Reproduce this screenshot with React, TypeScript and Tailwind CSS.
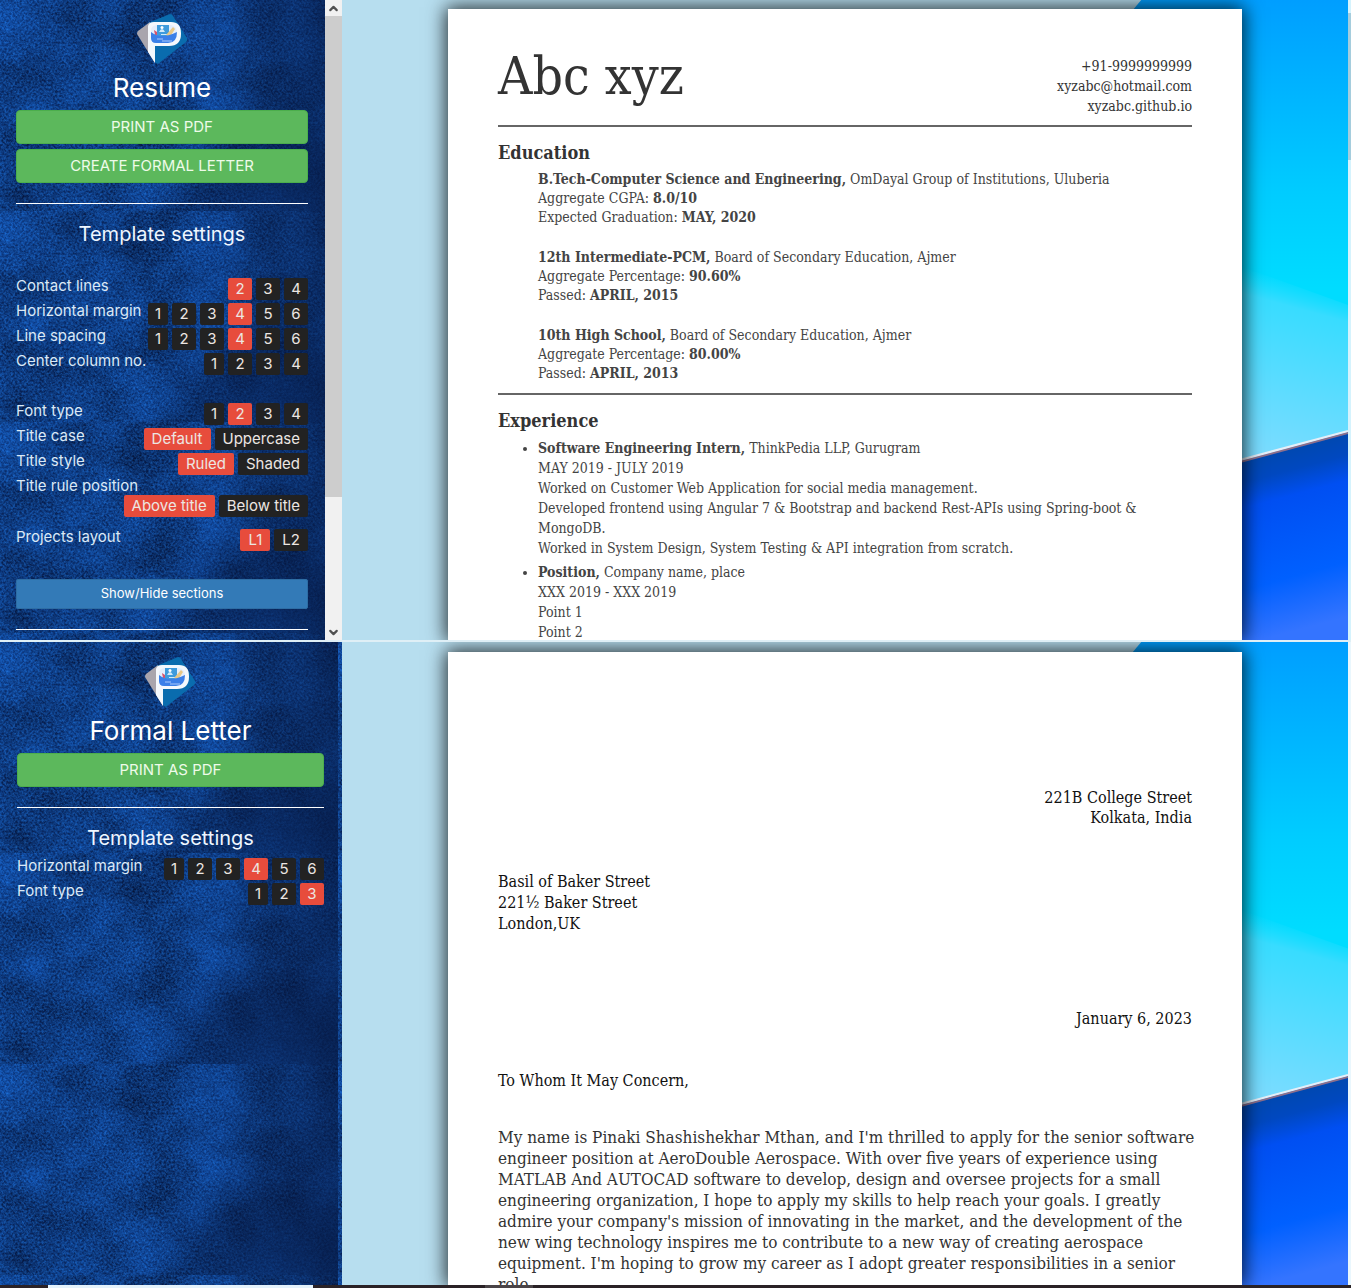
import { ChevronDown, ChevronUp } from "lucide-react";
import type { ReactNode } from "react";

function Logo() {
  return (
    <svg viewBox="0 0 51 51" className="mx-auto size-[51px]" aria-label="Logo" role="img">
      <path d="M33 0 Q35 0 36 2 L50 24 Q51 26 49 28 L22 49 Q20 51 18 48 L11 9 Z" fill="#0a6cae" />
      <path d="M1 17 L13 8 L18 49 L0 20 Q0 18 1 17 Z" fill="#a9a5ad" />
      <path d="M11 12 Q12 8 17 8 H34 Q44 8 44 19 V20 Q44 32 32 32 H18 V49 L11 38 Z" fill="#f4f8fd" />
      <path d="M14 17 Q14 11 20 11 H34 Q40 12 40 19 Q40 29 31 29 H19 Q14 29 14 24 Z" fill="#e4eefc" />
      <path d="M20 11 H32 V25 H20 Z" fill="#3f9bdc" />
      <circle cx="25" cy="13.5" r="1.5" fill="#fff" />
      <path d="M22 18 Q25 12 28 18 Z M24 20h6v1h-6z M25 22h5v1h-5z" fill="#cfe9fa" />
      <path d="M29 21 L36 13 L38 15 L33 23 Z" fill="#e8c887" />
      <path d="M17 16 l3 2 v3 h-2 Z" fill="#d9536c" />
      <path d="M14 18 Q24 26 40 18 Q40 29 31 29 H19 Q14 29 14 24 Z" fill="#3b7fe8" />
      <path d="M20 25h6M25 27h10" stroke="#c7dcff" strokeWidth="0.8" />
    </svg>
  );
}

function Texture({ id, seed }: { id: string; seed: number }) {
  return (
    <svg className="absolute inset-0 -z-10 h-full w-full bg-[#0d3a80]" aria-hidden="true">
      <defs>
        <filter id={id + "-cloud"} x="0" y="0" width="100%" height="100%" colorInterpolationFilters="sRGB">
          <feTurbulence type="fractalNoise" baseFrequency="0.016" numOctaves={6} seed={seed} />
          <feColorMatrix values="0.08 0 0 0 0.02  0.36 0 0 0 0.06  0.7 0 0 0 0.18  0 0 0 0 1" />
        </filter>
        <filter id={id + "-grain"} x="0" y="0" width="100%" height="100%" colorInterpolationFilters="sRGB">
          <feTurbulence type="fractalNoise" baseFrequency="0.45" numOctaves={3} seed={seed + 3} />
          <feColorMatrix values="0.3 0 0 0 -0.1  1 0 0 0 -0.25  1.6 0 0 0 -0.28  0 0 0 0 0.35" />
        </filter>
        <linearGradient id={id + "-shade"}>
          <stop offset="0.5" stopColor="#061c4a" stopOpacity="0" />
          <stop offset="1" stopColor="#061c4a" stopOpacity="0.6" />
        </linearGradient>
        <radialGradient id={id + "-corner"} cx="0.85" cy="0.9" r="0.45">
          <stop offset="0" stopColor="#061c4a" stopOpacity="0.55" />
          <stop offset="1" stopColor="#061c4a" stopOpacity="0" />
        </radialGradient>
        <pattern id={id + "-tile"} width="338" height="211" patternUnits="userSpaceOnUse">
          <rect width="338" height="211" filter={`url(#${id}-cloud)`} />
          <rect width="338" height="211" filter={`url(#${id}-grain)`} />
          <rect width="338" height="211" fill={`url(#${id}-shade)`} />
          <rect width="338" height="211" fill={`url(#${id}-corner)`} />
        </pattern>
      </defs>
      <rect width="100%" height="100%" fill={`url(#${id}-tile)`} />
    </svg>
  );
}

function Backdrop({ id }: { id: string }) {
  return (
    <svg
      className="absolute inset-0 -z-10 h-full w-full"
      viewBox="0 0 1007 640"
      preserveAspectRatio="none"
      aria-hidden="true"
    >
      <defs>
        <linearGradient id={id + "-sky"} x1="0" y1="0" x2="0" y2="1">
          <stop offset="0" stopColor="#009eff" />
          <stop offset="0.3" stopColor="#00ccff" />
          <stop offset="0.45" stopColor="#00dcff" />
        </linearGradient>
        <linearGradient
          id={id + "-glow"}
          gradientUnits="userSpaceOnUse"
          x1="915"
          y1="270"
          x2="866"
          y2="450"
        >
          <stop offset="0" stopColor="#2cdcff" stopOpacity="0" />
          <stop offset="0.14" stopColor="#38dcff" />
          <stop offset="1" stopColor="#80dcff" />
        </linearGradient>
        <linearGradient
          id={id + "-sea"}
          gradientUnits="userSpaceOnUse"
          x1="900"
          y1="461"
          x2="946"
          y2="633"
        >
          <stop offset="0" stopColor="#0048b0" />
          <stop offset="0.12" stopColor="#0048c0" />
          <stop offset="0.26" stopColor="#004ff2" />
          <stop offset="0.7" stopColor="#0060ff" />
          <stop offset="1" stopColor="#3474ff" />
        </linearGradient>
      </defs>
      <rect width="1007" height="640" fill="#b7deef" />
      <path d="M800 0 H1007 V640 H780 V24 Z" fill={`url(#${id}-sky)`} />
      <path d="M860 252 L1007 305 V440 L860 475 Z" fill={`url(#${id}-glow)`} />
      <path d="M880 466 L1007 432 V640 H880 Z" fill={`url(#${id}-sea)`} />
      <path d="M880 467 L1007 433" stroke="#8c6f8c" strokeWidth="2" />
      <path d="M880 465 L1007 431" stroke="#e6eef8" strokeWidth="2" />
    </svg>
  );
}

function GreenButton({ children }: { children: ReactNode }) {
  return (
    <button className="h-[34px] w-full rounded border border-[#4cae4c] bg-[#5cb85c] text-[15px] text-[#eefbe9]">
      {children}
    </button>
  );
}

function Setting({
  label,
  options,
  active,
  stacked = false,
}: {
  label: string;
  options: string[];
  active?: string;
  stacked?: boolean;
}) {
  return (
    <div
      role="group"
      aria-label={label}
      className={stacked ? "flex flex-col" : "flex h-[22px] items-start justify-between"}
    >
      <span className={stacked ? "h-[17px] leading-4 whitespace-nowrap" : "leading-4 whitespace-nowrap"}>{label}</span>
      <div className="flex justify-end gap-1">
        {options.map((o) => (
          <button
            key={o}
            aria-pressed={o === active}
            className={[
              "h-[22px] rounded-xs text-center leading-[22px] whitespace-nowrap text-[#ece6e2]",
              o === active ? "bg-[#e74c3c]" : "bg-[#222222]",
              o === "1" ? "w-5" : o.length === 1 ? "w-6" : "px-2",
            ].join(" ")}
          >
            {o}
          </button>
        ))}
      </div>
    </div>
  );
}

function Desk({ children }: { children: ReactNode }) {
  return (
    <main className="relative isolate flex min-w-0 flex-1 justify-center overflow-hidden">
      {children}
    </main>
  );
}

const sheet =
  "w-[794px] shrink-0 bg-white px-[50px] shadow-[0_0_18px_2px_rgba(0,0,0,0.8)] font-['DejaVu_Serif_Condensed','DejaVu_Serif',serif]";

function Entry({ title, place, children }: { title: string; place: string; children: ReactNode }) {
  return (
    <li>
      <b>{title}</b> {place}
      <br />
      {children}
    </li>
  );
}

function ResumeSection() {
  return (
    <section className="flex min-h-0">
      <aside className="relative isolate w-[325px] shrink-0 overflow-hidden px-4 pt-3.5 pr-[17px] font-[Inter,sans-serif] text-[15px] text-[#dbe9f6]">
        <Texture id="tex-a" seed={4} />
        <Logo />
        <h1 className="mt-1.5 mb-1.5 h-[33px] text-center text-[26px] leading-[33px] text-white">Resume</h1>
        <div className="flex flex-col gap-[5px]">
          <GreenButton>PRINT AS PDF</GreenButton>
          <GreenButton>CREATE FORMAL LETTER</GreenButton>
        </div>
        <hr className="mt-5 border-white" />
        <h2 className="mt-5 text-center text-xl leading-5 text-[#eef6ff]">Template settings</h2>
        <div className="mt-[34px] flex flex-col gap-[3px]">
          <Setting label="Contact lines" options={["2", "3", "4"]} active="2" />
          <Setting label="Horizontal margin" options={["1", "2", "3", "4", "5", "6"]} active="4" />
          <Setting label="Line spacing" options={["1", "2", "3", "4", "5", "6"]} active="4" />
          <Setting label="Center column no." options={["1", "2", "3", "4"]} />
        </div>
        <div className="mt-7 flex flex-col gap-[3px]">
          <Setting label="Font type" options={["1", "2", "3", "4"]} active="2" />
          <Setting label="Title case" options={["Default", "Uppercase"]} active="Default" />
          <Setting label="Title style" options={["Ruled", "Shaded"]} active="Ruled" />
          <Setting label="Title rule position" options={["Above title", "Below title"]} active="Above title" stacked />
        </div>
        <div className="mt-3">
          <Setting label="Projects layout" options={["L1", "L2"]} active="L1" />
        </div>
        <button className="mt-7 h-[30px] w-full rounded-xs border border-[#2e6da4] bg-[#337ab7] text-[13px] text-white">
          Show/Hide sections
        </button>
        <hr className="mt-5 border-white" />
      </aside>
      <div className="flex w-[17px] shrink-0 flex-col bg-[#f1f1f1] text-[#505050]">
        <ChevronUp size={13} strokeWidth={4} className="mx-auto mt-0.5 mb-px shrink-0" />
        <div className="h-[481px] bg-[#cdcdcd]" />
        <ChevronDown size={13} strokeWidth={4} className="mx-auto mt-auto mb-px shrink-0" />
      </div>
      <Desk>
        <Backdrop id="bg-a" />
        <article className={sheet + " mt-[9px] text-[#444444]"}>
          <header className="flex items-start justify-between border-b-2 border-[#666666] pt-[35px] pb-[9px] text-[#333333]">
            <h2 className="text-[53px] leading-[64px]">Abc xyz</h2>
            <address className="pt-3 text-right text-sm leading-5 not-italic">
              +91-9999999999
              <br />
              xyzabc@hotmail.com
              <br />
              xyzabc.github.io
            </address>
          </header>
          <h3 className="mt-3 text-lg leading-7 font-bold text-[#333333]">Education</h3>
          <ul className="mt-[3px] flex flex-col gap-[21px] border-b-2 border-[#666666] pb-2.5 pl-10 text-sm leading-[19px] whitespace-nowrap">
            <Entry title="B.Tech-Computer Science and Engineering," place="OmDayal Group of Institutions, Uluberia">
              Aggregate CGPA: <b>8.0/10</b>
              <br />
              Expected Graduation: <b>MAY, 2020</b>
            </Entry>
            <Entry title="12th Intermediate-PCM," place="Board of Secondary Education, Ajmer">
              Aggregate Percentage: <b>90.60%</b>
              <br />
              Passed: <b>APRIL, 2015</b>
            </Entry>
            <Entry title="10th High School," place="Board of Secondary Education, Ajmer">
              Aggregate Percentage: <b>80.00%</b>
              <br />
              Passed: <b>APRIL, 2013</b>
            </Entry>
          </ul>
          <h3 className="mt-3 text-lg leading-7 font-bold text-[#333333]">Experience</h3>
          <ul className="mt-[3px] flex list-disc flex-col gap-1 pl-10 text-sm leading-5 whitespace-nowrap">
            <Entry title="Software Engineering Intern," place="ThinkPedia LLP, Gurugram">
              MAY 2019 - JULY 2019
              <br />
              Worked on Customer Web Application for social media management.
              <br />
              Developed frontend using Angular 7 &amp; Bootstrap and backend Rest-APIs using Spring-boot &amp;
              <br />
              MongoDB.
              <br />
              Worked in System Design, System Testing &amp; API integration from scratch.
            </Entry>
            <Entry title="Position," place="Company name, place">
              XXX 2019 - XXX 2019
              <br />
              Point 1
              <br />
              Point 2
            </Entry>
          </ul>
        </article>
      </Desk>
      <div className="w-[3px] shrink-0 bg-[#d5f3fd] pt-[13px]">
        <div className="h-[147px] bg-[#a5cddd]" />
      </div>
    </section>
  );
}

function LetterSection() {
  return (
    <section className="flex min-h-0">
      <aside className="relative isolate w-[342px] shrink-0 overflow-hidden pt-[15px] pr-[18px] pl-[17px] font-[Inter,sans-serif] text-[15px] text-[#dbe9f6]">
        <Texture id="tex-b" seed={4} />
        <Logo />
        <h1 className="mt-1.5 mb-1.5 h-[33px] text-center text-[26px] leading-[33px] text-white">Formal Letter</h1>
        <GreenButton>PRINT AS PDF</GreenButton>
        <hr className="mt-5 border-white" />
        <h2 className="mt-5 text-center text-xl leading-5 text-[#eef6ff]">Template settings</h2>
        <div className="mt-2.5 flex flex-col gap-[3px]">
          <Setting label="Horizontal margin" options={["1", "2", "3", "4", "5", "6"]} active="4" />
          <Setting label="Font type" options={["1", "2", "3"]} active="3" />
        </div>
      </aside>
      <Desk>
        <Backdrop id="bg-b" />
        <article className={sheet + " mt-2.5 pt-[136px] text-[17px] leading-[21px] whitespace-nowrap text-[#333333]"}>
          <address className="text-right text-base leading-5 text-[#111111] not-italic">
            221B College Street
            <br />
            Kolkata, India
          </address>
          <address className="mt-[43px] text-base leading-[21px] text-[#111111] not-italic">
            Basil of Baker Street
            <br />
            221½ Baker Street
            <br />
            London,UK
          </address>
          <p className="mt-[74px] text-right text-base leading-[21px] text-[#111111]">January 6, 2023</p>
          <p className="mt-[41px] text-base leading-[21px] text-[#111111]">To Whom It May Concern,</p>
          <p className="mt-9">
            My name is Pinaki Shashishekhar Mthan, and I'm thrilled to apply for the senior software
            <br />
            engineer position at AeroDouble Aerospace. With over five years of experience using
            <br />
            MATLAB And AUTOCAD software to develop, design and oversee projects for a small
            <br />
            engineering organization, I hope to apply my skills to help reach your goals. I greatly
            <br />
            admire your company's mission of innovating in the market, and the development of the
            <br />
            new wing technology inspires me to contribute to a new way of creating aerospace
            <br />
            equipment. I'm hoping to grow my career as I adopt greater responsibilities in a senior
            <br />
            role.
          </p>
        </article>
      </Desk>
      <div className="w-[3px] shrink-0 bg-[#eaf7fd]" />
    </section>
  );
}

export default function App() {
  return (
    <div className="flex h-screen flex-col bg-[#dfeff6]">
      <div className="grid min-h-0 flex-1 grid-rows-[minmax(0,640fr)_minmax(0,643fr)] gap-0.5">
        <ResumeSection />
        <LetterSection />
      </div>
      <div className="flex h-[3px] shrink-0 bg-[#2a2226] pl-12">
        <div className="w-[265px] bg-[#e4f2fb]" />
        <div className="ml-[172px] w-12 bg-[#4a4447]" />
      </div>
    </div>
  );
}
